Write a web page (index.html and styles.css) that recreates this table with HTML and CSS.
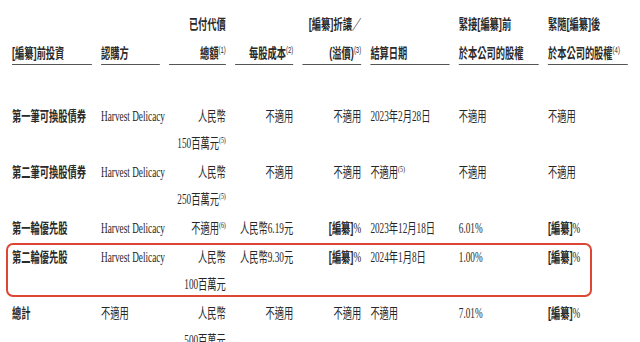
FILE: index.html
```html
<!DOCTYPE html>
<html lang="zh-Hant">
<head>
<meta charset="utf-8">
<link rel="stylesheet" href="styles.css">
</head>
<body>
<div class="page">
  <div class="table">
    <div class="head">
      <div class="hc"><div class="l1"></div><div class="l2">[編纂]前投資</div></div>
      <div class="hc"><div class="l1"></div><div class="l2">認購方</div></div>
      <div class="hc r"><div class="l1">已付代價</div><div class="l2">總額<sup>(1)</sup></div></div>
      <div class="hc r"><div class="l1"></div><div class="l2">每股成本<sup>(2)</sup></div></div>
      <div class="hc r"><div class="l1">[編纂]折讓／</div><div class="l2">(溢價)<sup>(3)</sup></div></div>
      <div class="hc"><div class="l1"></div><div class="l2">結算日期</div></div>
      <div class="hc"><div class="l1">緊接[編纂]前</div><div class="l2">於本公司的股權</div></div>
      <div class="hc"><div class="l1">緊隨[編纂]後</div><div class="l2">於本公司的股權<sup>(4)</sup></div></div>
    </div>

    <div class="row">
      <div class="c lbl">第一筆可換股債券</div>
      <div class="c">Harvest Delicacy</div>
      <div class="c r"><div>人民幣</div><div>150百萬元<sup>(5)</sup></div></div>
      <div class="c r">不適用</div>
      <div class="c r">不適用</div>
      <div class="c">2023年2月28日</div>
      <div class="c">不適用</div>
      <div class="c">不適用</div>
    </div>

    <div class="row">
      <div class="c lbl">第二筆可換股債券</div>
      <div class="c">Harvest Delicacy</div>
      <div class="c r"><div>人民幣</div><div>250百萬元<sup>(5)</sup></div></div>
      <div class="c r">不適用</div>
      <div class="c r">不適用</div>
      <div class="c">不適用<sup>(5)</sup></div>
      <div class="c">不適用</div>
      <div class="c">不適用</div>
    </div>

    <div class="row">
      <div class="c lbl">第一輪優先股</div>
      <div class="c">Harvest Delicacy</div>
      <div class="c r">不適用<sup>(6)</sup></div>
      <div class="c r">人民幣6.19元</div>
      <div class="c r"><b>[編纂]</b>%</div>
      <div class="c">2023年12月18日</div>
      <div class="c">6.01%</div>
      <div class="c"><b>[編纂]</b>%</div>
    </div>

    <div class="row">
      <div class="c lbl">第二輪優先股</div>
      <div class="c">Harvest Delicacy</div>
      <div class="c r"><div>人民幣</div><div>100百萬元</div></div>
      <div class="c r">人民幣9.30元</div>
      <div class="c r"><b>[編纂]</b>%</div>
      <div class="c">2024年1月8日</div>
      <div class="c">1.00%</div>
      <div class="c"><b>[編纂]</b>%</div>
    </div>

    <div class="row">
      <div class="c lbl">總計</div>
      <div class="c">不適用</div>
      <div class="c r"><div>人民幣</div><div>500百萬元</div></div>
      <div class="c r">不適用</div>
      <div class="c r">不適用</div>
      <div class="c">不適用</div>
      <div class="c">7.01%</div>
      <div class="c"><b>[編纂]</b>%</div>
    </div>
  </div>
  <div class="mark"></div>
</div>
</body>
</html>
```

FILE: styles.css
```css
html, body {
  margin: 0;
  padding: 0;
  background: #ffffff;
}

.page {
  position: relative;
  width: 640px;
  height: 342px;
  overflow: hidden;
  padding-left: 12px;
  box-sizing: border-box;
  font-family: "Liberation Serif", "Noto Sans CJK TC", serif;
  color: #262626;
}

.table {
  width: 933px;
  transform: scaleX(0.66);
  transform-origin: 0 0;
  font-size: 14px;
}

.head,
.row {
  display: grid;
  grid-template-columns: 121px 89px 86px 88px 89px 120px 121px 121px;
  column-gap: 14px;
}

.head {
  padding-top: 10px;
  margin-bottom: 38px;
  font-family: "Liberation Sans", "Noto Sans CJK TC", sans-serif;
  font-weight: 700;
  color: #2a2a2a;
}

.hc {
  display: flex;
  flex-direction: column;
  border-bottom: 1.5px solid #555555;
}

.hc.r {
  text-align: right;
}

.l1 {
  height: 28px;
  line-height: 28px;
  white-space: nowrap;
}

.l2 {
  line-height: 18px;
  margin-top: 6px;
  padding-bottom: 2px;
  white-space: nowrap;
}

sup {
  font-size: 9px;
  line-height: 0;
  vertical-align: 5px;
  font-weight: 400;
}

.row {
  line-height: 27px;
  padding-bottom: 2px;
}

.c {
  white-space: nowrap;
}

.c.r {
  text-align: right;
}

.lbl {
  font-family: "Liberation Sans", "Noto Sans CJK TC", sans-serif;
  font-weight: 700;
  color: #2a2a2a;
}

.c b {
  font-family: "Liberation Sans", "Noto Sans CJK TC", sans-serif;
  font-weight: 700;
  color: #2a2a2a;
}

.mark {
  position: absolute;
  left: 6px;
  top: 243px;
  width: 586px;
  height: 54px;
  box-sizing: border-box;
  border: 2.5px solid #dc4632;
  border-radius: 7px;
}
```
